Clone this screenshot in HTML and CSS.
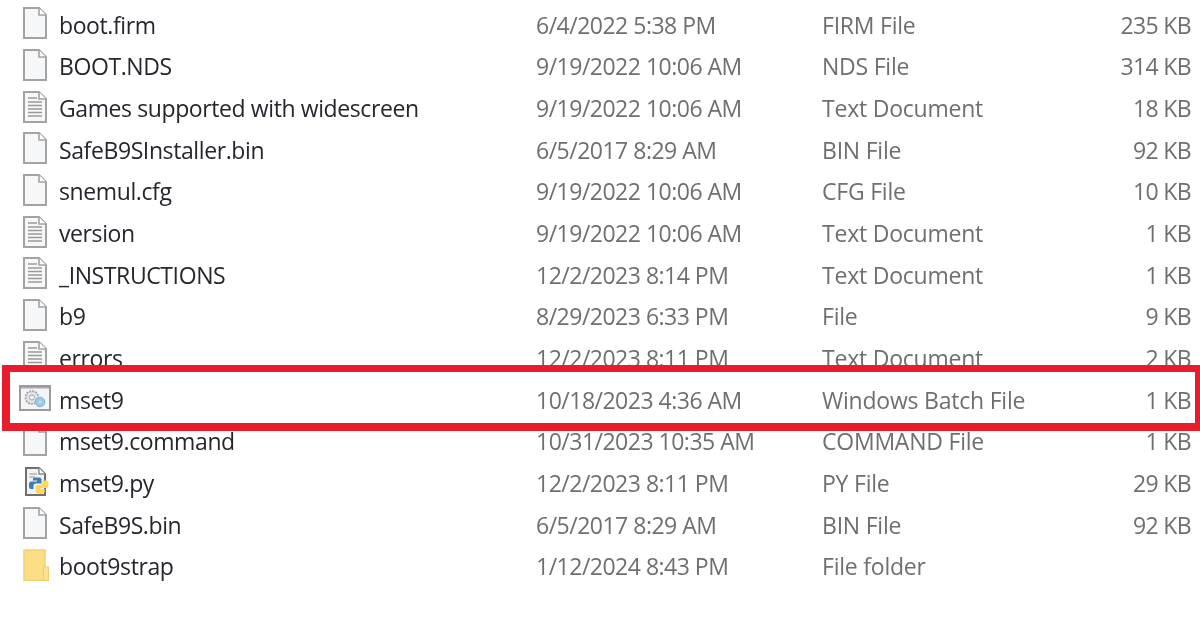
FILE: index.html
```html
<!DOCTYPE html>
<html lang="en">
<head>
<meta charset="utf-8">
<title>Files</title>
<link rel="stylesheet" href="styles.css">
</head>
<body>
<svg class="defs" width="0" height="0" aria-hidden="true">
  <defs>
    <symbol id="blank" viewBox="0 0 24 32">
      <path d="M1 1H16L23 8V31H1Z" fill="#f6f7f9" stroke="#a3a3a3" stroke-width="2"/>
      <path d="M16 1V8H23" fill="#fff" stroke="#a3a3a3" stroke-width="1.6"/>
    </symbol>
    <symbol id="text" viewBox="0 0 24 32">
      <path d="M1 1H16L23 8V31H1Z" fill="#f6f7f9" stroke="#a3a3a3" stroke-width="2"/>
      <path d="M16 1V8H23" fill="#fff" stroke="#a3a3a3" stroke-width="1.6"/>
      <path d="M5 7H14M5 11H19M5 14.500H19M5 18H19M5 21.500H19M5 25H19" stroke="#9a9a9a" stroke-width="1.5" fill="none"/>
    </symbol>
    <symbol id="bat" viewBox="0 0 32 26">
      <rect x="1" y="1" width="30" height="24" fill="#f3f5f7" stroke="#9b9b9b" stroke-width="2"/>
      <rect x="2" y="2" width="28" height="1.500" fill="#a9a9a9"/>
      <circle cx="13" cy="12.500" r="6.500" fill="#dfe3e8" stroke="#a4a8ae" stroke-width="1.800" stroke-dasharray="2 1"/>
      <circle cx="13" cy="12.500" r="2.500" fill="#f4f5f6" stroke="#a4a8ae"/>
      <circle cx="21" cy="17" r="4.800" fill="#9cc8e4" stroke="#84b4d2"/>
      <circle cx="21" cy="17" r="1.500" fill="#c4e0f0"/>
    </symbol>
    <symbol id="py" viewBox="0 0 25 29">
      <path d="M1 1H14L20 7V28H1Z" fill="#f1f2f4" stroke="#6f6f6f" stroke-width="2"/>
      <path d="M14 1V7H20" fill="#fff" stroke="#8a8a8a" stroke-width="1.400"/>
      <path d="M4.500 7H12M4.500 10H10" stroke="#a9b4c0" stroke-width="1.400"/>
      <path d="M9 10.500H14.500Q16.500 10.500 16.500 12.500V16.500H11Q8.500 16.500 8.500 19V22H6Q4 22 4 19.500V17Q4 14.500 6.500 14.500H12V13.500H8Q7.500 11 9 10.500Z" fill="#3f7cb4"/>
      <path d="M17.500 13.500H20.500Q23.500 13.500 23.500 16.500V19Q23.500 21 21 21H15.500V22H19.500Q20.500 25 18 26.500Q15 28 12.500 26.500Q10.500 25.500 10.500 23.500V20Q10.500 18 12.500 18H16Q17.500 18 17.500 16.500Z" fill="#ffd75a"/>
    </symbol>
    <symbol id="folder" viewBox="0 0 26 32">
      <path d="M1 1H22V31.500H1Z" fill="#fbdf85" stroke="#f3d070" stroke-width="1.500"/>
      <path d="M20.500 18H25.500V31.500H20.500Z" fill="#fce394" stroke="#eecb6c" stroke-width="1.200"/>
    </symbol>
  </defs>
</svg>
<main class="list">
  <div class="row"><svg class="icon doc"><use href="#blank"/></svg><span class="name">boot.firm</span><span class="date">6/4/2022 5:38 PM</span><span class="type">FIRM File</span><span class="size">235 KB</span></div>
  <div class="row"><svg class="icon doc"><use href="#blank"/></svg><span class="name">BOOT.NDS</span><span class="date">9/19/2022 10:06 AM</span><span class="type">NDS File</span><span class="size">314 KB</span></div>
  <div class="row"><svg class="icon doc"><use href="#text"/></svg><span class="name">Games supported with widescreen</span><span class="date">9/19/2022 10:06 AM</span><span class="type">Text Document</span><span class="size">18 KB</span></div>
  <div class="row"><svg class="icon doc"><use href="#blank"/></svg><span class="name">SafeB9SInstaller.bin</span><span class="date">6/5/2017 8:29 AM</span><span class="type">BIN File</span><span class="size">92 KB</span></div>
  <div class="row"><svg class="icon doc"><use href="#blank"/></svg><span class="name">snemul.cfg</span><span class="date">9/19/2022 10:06 AM</span><span class="type">CFG File</span><span class="size">10 KB</span></div>
  <div class="row"><svg class="icon doc"><use href="#text"/></svg><span class="name">version</span><span class="date">9/19/2022 10:06 AM</span><span class="type">Text Document</span><span class="size">1 KB</span></div>
  <div class="row"><svg class="icon doc"><use href="#text"/></svg><span class="name">_INSTRUCTIONS</span><span class="date">12/2/2023 8:14 PM</span><span class="type">Text Document</span><span class="size">1 KB</span></div>
  <div class="row"><svg class="icon doc"><use href="#blank"/></svg><span class="name">b9</span><span class="date">8/29/2023 6:33 PM</span><span class="type">File</span><span class="size">9 KB</span></div>
  <div class="row"><svg class="icon doc"><use href="#text"/></svg><span class="name">errors</span><span class="date">12/2/2023 8:11 PM</span><span class="type">Text Document</span><span class="size">2 KB</span></div>
  <div class="row row-marked"><svg class="icon bat"><use href="#bat"/></svg><span class="name">mset9</span><span class="date">10/18/2023 4:36 AM</span><span class="type">Windows Batch File</span><span class="size">1 KB</span></div>
  <div class="row"><svg class="icon doc"><use href="#blank"/></svg><span class="name">mset9.command</span><span class="date">10/31/2023 10:35 AM</span><span class="type">COMMAND File</span><span class="size">1 KB</span></div>
  <div class="row"><svg class="icon py"><use href="#py"/></svg><span class="name">mset9.py</span><span class="date">12/2/2023 8:11 PM</span><span class="type">PY File</span><span class="size">29 KB</span></div>
  <div class="row"><svg class="icon doc"><use href="#blank"/></svg><span class="name">SafeB9S.bin</span><span class="date">6/5/2017 8:29 AM</span><span class="type">BIN File</span><span class="size">92 KB</span></div>
  <div class="row"><svg class="icon folder"><use href="#folder"/></svg><span class="name">boot9strap</span><span class="date">1/12/2024 8:43 PM</span><span class="type">File folder</span><span class="size"></span></div>
</main>
</body>
</html>
```
FILE: styles.css
```css
html, body {
  margin: 0;
  padding: 0;
  background: #fff;
  overflow: hidden;
}

.defs {
  position: absolute;
}

.list {
  padding-top: 4px;
  font-family: "Open Sans", "Noto Sans", sans-serif;
  font-size: 23px;
  letter-spacing: -0.5px;
  filter: blur(0.45px);
}

.row {
  display: grid;
  grid-template-columns: 40px 477px 286px 1fr auto;
  align-items: center;
  height: 41.67px;
  padding: 0 9px 0 19px;
  white-space: nowrap;
  color: #6f6f6f;
}

.name {
  color: #26262f;
  letter-spacing: -0.4px;
}

.type {
  letter-spacing: -0.22px;
}

.size {
  text-align: right;
  letter-spacing: -0.65px;
}

.icon {
  display: block;
  margin-top: -3px;
}

.doc {
  width: 24px;
  height: 32px;
  margin-left: 4px;
}

.bat {
  width: 32px;
  height: 26px;
}

.py {
  width: 25px;
  height: 29px;
  margin-left: 6px;
}

.folder {
  width: 26px;
  height: 32px;
  margin-left: 4px;
}

.row-marked {
  position: relative;
  z-index: 1;
}

.row-marked::before {
  content: "";
  position: absolute;
  z-index: -1;
  left: 2px;
  right: 0;
  top: -14px;
  bottom: -10.5px;
  background: #fff;
  border-style: solid;
  border-color: #e81c2a;
  border-width: 7px 5px 8px 8px;
}
```
